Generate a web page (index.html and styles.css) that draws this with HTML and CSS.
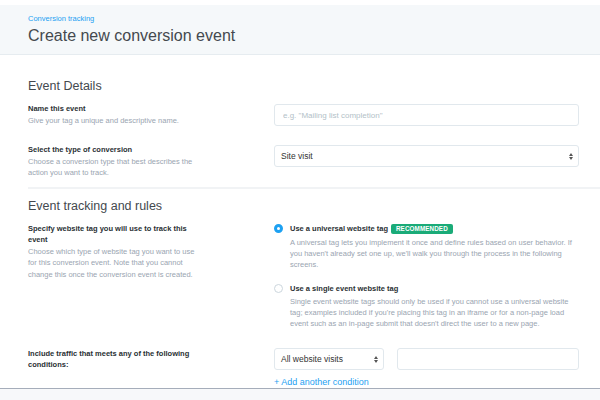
FILE: index.html
```html
<!DOCTYPE html>
<html lang="en">
<head>
  <meta charset="UTF-8" />
  <title>Create new conversion event</title>
  <link rel="stylesheet" href="styles.css">
</head>
<body>

  <header class="page-header">
    <div class="crumb">Conversion tracking</div>
    <h1>Create new conversion event</h1>
  </header>

  <section class="section">
    <h2>Event Details</h2>

    <div class="row">
      <div class="label">
        <strong>Name this event</strong>
        <p>Give your tag a unique and descriptive name.</p>
      </div>
      <div class="field">
        <input class="input" type="text" placeholder="e.g. &quot;Mailing list completion&quot;" />
      </div>
    </div>

    <div class="row">
      <div class="label">
        <strong>Select the type of conversion</strong>
        <p>Choose a conversion type that best describes the action you want to track.</p>
      </div>
      <div class="field">
        <div class="select">
          <span>Site visit</span>
          <svg width="4" height="7" viewBox="0 0 4 7"><path d="M0 3 L2 0 L4 3 Z M0 4 L2 7 L4 4 Z" fill="#555"/></svg>
        </div>
      </div>
    </div>
  </section>

  <section class="section">
    <h2>Event tracking and rules</h2>

    <div class="row">
      <div class="label">
        <strong>Specify website tag you will use to track this event</strong>
        <p>Choose which type of website tag you want to use for this conversion event. Note that you cannot change this once the conversion event is created.</p>
      </div>
      <div class="field">
        <div class="option">
          <span class="radio checked"></span>
          <div class="option-text">
            <div class="option-title">Use a universal website tag<span class="badge">RECOMMENDED</span></div>
            <p>A universal tag lets you implement it once and define rules based on user behavior. If you haven't already set one up, we'll walk you through the process in the following screens.</p>
          </div>
        </div>
        <div class="option">
          <span class="radio"></span>
          <div class="option-text">
            <div class="option-title">Use a single event website tag</div>
            <p>Single event website tags should only be used if you cannot use a universal website tag; examples included if you're placing this tag in an iframe or for a non-page load event such as an in-page submit that doesn't direct the user to a new page.</p>
          </div>
        </div>
      </div>
    </div>

    <div class="row">
      <div class="label">
        <strong class="pad">Include traffic that meets any of the following conditions:</strong>
      </div>
      <div class="field">
        <div class="condition">
          <div class="select small">
            <span>All website visits</span>
            <svg width="4" height="7" viewBox="0 0 4 7"><path d="M0 3 L2 0 L4 3 Z M0 4 L2 7 L4 4 Z" fill="#555"/></svg>
          </div>
          <input class="input" type="text" />
        </div>
        <a class="add-link" href="#">+ Add another condition</a>
      </div>
    </div>
  </section>

  <div class="footer-bar"></div>

</body>
</html>
```

FILE: styles.css
```css
* { box-sizing: border-box; }
body { margin: 0; font-family: "Liberation Sans", Arial, sans-serif; color: #333; background: #fff; }

.page-header {
  margin-top: 5px; height: 50px; padding: 9px 28px 0;
  background: #f5f8fa; border-bottom: 1px solid #e6ecf0;
}
.crumb { font-size: 7.5px; line-height: 10px; color: #1da1f2; }
.page-header h1 {
  margin: 1px 0 0; font-size: 16px; line-height: 22px;
  font-weight: normal; color: #44494e;
}

.section {
  margin-left: 28px; padding: 22px 21px 8px 0;
  border-bottom: 2px solid #f1f3f5;
}
.section + .section { padding-top: 8px; border-bottom: none; }
.section h2 {
  margin: 0 0 8px; font-size: 12.5px; line-height: 18px;
  font-weight: normal; color: #44494e;
}

.row { display: grid; grid-template-columns: 174px 1fr; column-gap: 72px; margin-bottom: 18px; }
.row:last-child { margin-bottom: 0; }

.label strong { display: block; font-size: 7.5px; line-height: 11.5px; color: #292f33; }
.label strong.pad { padding-top: 1px; line-height: 11px; }
.label p { margin: 0; font-size: 7.5px; line-height: 11.5px; color: #9aa5b1; }

.field { min-width: 0; }

.input {
  display: block; width: 100%; height: 22px; margin-top: 1px; padding: 0 8px;
  border: 1px solid #e1e8ed; border-radius: 3px;
  font-family: "Liberation Sans", Arial, sans-serif; font-size: 8px; color: #333;
  outline: none;
}
.input::placeholder { color: #b3bfc8; }

.select {
  display: flex; align-items: center; justify-content: space-between;
  height: 22px; margin-top: 1px; padding: 0 5px 0 6px;
  border: 1px solid #e1e8ed; border-radius: 3px; background: #fff;
  font-size: 8.5px; color: #333;
}

.option { display: flex; gap: 7px; }
.option + .option { margin-top: 12.5px; }
.radio {
  flex: 0 0 9px; width: 9px; height: 9px; margin-top: 1.5px;
  border: 1px solid #ccd6dd; border-radius: 50%; background: #fff;
}
.radio.checked { border: 3px solid #1da1f2; background: #fff; }
.option-title { display: flex; align-items: center; height: 12px; font-size: 7.5px; font-weight: bold; color: #292f33; }
.option-text p { margin: 2px 0 0; font-size: 7.5px; line-height: 11px; color: #9aa5b1; }
.badge {
  margin-left: 3px; height: 10px; line-height: 10px; padding: 0 5px;
  background: #1aab78; color: #fff; border-radius: 2px;
  font-size: 6.3px; font-weight: bold; letter-spacing: 0.1px;
}

.condition { display: flex; gap: 13px; }
.condition .select { flex: 0 0 110px; }
.condition .input { flex: 1; }

.add-link {
  display: block; margin-top: 7px; font-size: 9px; line-height: 11px;
  color: #1da1f2; text-decoration: none;
}

.footer-bar {
  position: fixed; left: 0; right: 0; bottom: 0; height: 12px;
  background: #f7f8fa; border-top: 1px solid #a5adba;
}
```
